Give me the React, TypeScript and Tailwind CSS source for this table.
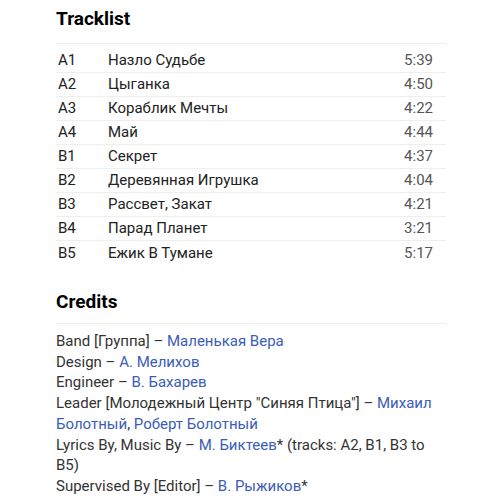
const tracks = [
  ["A1", "Назло Судьбе", "5:39"],
  ["A2", "Цыганка", "4:50"],
  ["A3", "Кораблик Мечты", "4:22"],
  ["A4", "Май", "4:44"],
  ["B1", "Секрет", "4:37"],
  ["B2", "Деревянная Игрушка", "4:04"],
  ["B3", "Рассвет, Закат", "4:21"],
  ["B4", "Парад Планет", "3:21"],
  ["B5", "Ежик В Тумане", "5:17"],
];

function A({ children }: { children: React.ReactNode }) {
  return <a className="text-[#3b5cb8]">{children}</a>;
}

export default function App() {
  return (
    <div className="min-h-[500px] bg-white font-['Roboto',sans-serif] text-[#222]">
      <div className="ml-[56px] w-[390px]">
        <h2 className="pt-[7px] text-[19px] font-bold leading-[24px] text-black mb-[12px]">Tracklist</h2>
        <div className="border-t border-[#eeeeee] pt-[5px] text-[15px]">
          {tracks.map(([pos, title, dur], i) => (
            <div
              key={pos}
              className={`flex h-[24px] items-center ${i < tracks.length - 1 ? "border-b border-[#eeeeee]" : ""}`}>
              <span className="w-[52px] pl-[2px]">{pos}</span>
              <span className="flex-1">{title}</span>
              <span className="pr-[13px] text-[#555]">{dur}</span>
            </div>
          ))}
        </div>

        <h2 className="mt-[25px] text-[19px] font-bold leading-[24px] text-black mb-[9px]">Credits</h2>
        <div className="border-t border-[#eeeeee] pt-[7px] text-[15px] leading-[20.7px] text-[#333]">
          <div>
            Band [Группа] – <A>Маленькая Вера</A>
          </div>
          <div>
            Design – <A>А. Мелихов</A>
          </div>
          <div>
            Engineer – <A>В. Бахарев</A>
          </div>
          <div>
            Leader [Молодежный Центр "Синяя Птица"] – <A>Михаил Болотный</A>, <A>Роберт Болотный</A>
          </div>
          <div>
            Lyrics By, Music By – <A>М. Биктеев</A>* (tracks: A2, B1, B3 to B5)
          </div>
          <div>
            Supervised By [Editor] – <A>В. Рыжиков</A>*
          </div>
        </div>
      </div>
    </div>
  );
}
